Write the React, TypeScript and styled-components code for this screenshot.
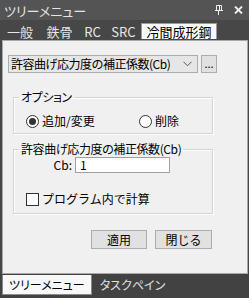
import React from 'react';
import styled, { createGlobalStyle } from 'styled-components';

const GlobalStyle = createGlobalStyle`
  html, body {
    margin: 0;
    padding: 0;
    background: #454545;
  }
  * {
    box-sizing: border-box;
  }
`;

const FONT = `"Noto Sans CJK JP", "Noto Sans", sans-serif`;

const Window = styled.div`
  width: 249px;
  height: 298px;
  display: flex;
  flex-direction: column;
  background: #474747;
  font-family: ${FONT};
  font-size: 12px;
  color: #000;
  overflow: hidden;
`;

const TitleBar = styled.div`
  height: 20px;
  display: flex;
  align-items: center;
  padding: 0 6px 0 4px;
  background: #545454;
  color: #e6e6e6;
  font-size: 13px;
  font-feature-settings: "palt";
  line-height: 1;
`;

const TitleText = styled.span`
  flex: 1;
`;

const TitleIcons = styled.div`
  display: flex;
  align-items: center;
  gap: 11px;
`;

const TabStrip = styled.div`
  height: 20px;
  display: flex;
  align-items: flex-start;
  padding-top: 3px;
  background: #474747;
`;

const Tab = styled.div<{ $active?: boolean; $w: number }>`
  width: ${(p) => p.$w}px;
  height: 16px;
  display: flex;
  align-items: center;
  justify-content: center;
  font-size: 13px;
  line-height: 1;
  color: ${(p) => (p.$active ? '#000' : '#e8e8e8')};
  background: ${(p) => (p.$active ? '#fafafa' : 'transparent')};
  border: ${(p) => (p.$active ? '1px solid #9a9a9a' : '1px solid transparent')};
  border-bottom: none;
`;

const Panel = styled.div`
  flex: 0 0 234px;
  margin: 0 1px 0 2px;
  background: #f0f0f0;
  border: 1px solid #a8a8a8;
  padding: 14px 0 0 5px;
  display: flex;
  flex-direction: column;
`;

const ComboRow = styled.div`
  display: flex;
  gap: 3px;
`;

const Combo = styled.div`
  width: 190px;
  height: 18px;
  display: flex;
  align-items: center;
  padding: 0 5px 0 2px;
  background: #e6e6e6;
  border: 1px solid #acacac;
  line-height: 1;
`;

const ComboText = styled.span`
  flex: 1;
  white-space: nowrap;
  letter-spacing: -0.5px;
`;

const MoreButton = styled.div`
  width: 16px;
  height: 18px;
  display: flex;
  align-items: center;
  justify-content: center;
  background: #e1e1e1;
  border: 1px solid #adadad;
  font-size: 11px;
  line-height: 1;
  padding-bottom: 2px;
`;

const Group = styled.fieldset<{ $top: number }>`
  width: 200px;
  margin: ${(p) => p.$top}px 0 0 5px;
  padding: 0;
  border: 1px solid #d4d4d4;
  box-shadow: inset 1px 1px 0 #ffffff, 1px 1px 0 #ffffff;
  min-width: 0;
`;

const Legend = styled.legend`
  margin-left: 5px;
  padding: 0 2px;
  font-size: 12px;
  line-height: 12px;
  letter-spacing: -0.4px;
  font-feature-settings: "palt";
`;

const RadioRow = styled.div`
  display: grid;
  grid-template-columns: 113px auto;
  padding: 11px 0 5px 12px;
`;

const Choice = styled.label`
  display: flex;
  align-items: center;
  gap: 3px;
  height: 14px;
  line-height: 1;
  white-space: nowrap;
`;

const RadioCircle = styled.span<{ $checked?: boolean }>`
  width: 13px;
  height: 13px;
  border-radius: 50%;
  border: 1px solid #333;
  background: #fff;
  display: flex;
  align-items: center;
  justify-content: center;
  &::after {
    content: '';
    width: 7px;
    height: 7px;
    border-radius: 50%;
    background: ${(p) => (p.$checked ? '#333' : 'transparent')};
  }
`;

const CheckBox = styled.span`
  width: 13px;
  height: 13px;
  border: 1px solid #333;
  background: #fff;
`;

const FieldRow = styled.div`
  display: flex;
  align-items: center;
  gap: 3px;
  margin-top: 2px;
`;

const FieldLabel = styled.span`
  width: 58px;
  text-align: right;
  line-height: 1;
`;

const TextBox = styled.div`
  width: 95px;
  height: 16px;
  display: flex;
  align-items: center;
  padding-left: 4px;
  background: #fff;
  border: 1px solid #a0a0a0;
  line-height: 1;
`;

const CheckRow = styled.div`
  margin-top: 19px;
  padding: 0 0 7px 12px;
`;

const ButtonRow = styled.div`
  width: 205px;
  display: flex;
  justify-content: flex-end;
  gap: 8px;
  margin-top: 16px;
  padding-right: 1px;
`;

const Button = styled.div<{ $w: number }>`
  width: ${(p) => p.$w}px;
  height: 19px;
  display: flex;
  align-items: center;
  justify-content: center;
  background: #e1e1e1;
  border: 1px solid #adadad;
  line-height: 1;
`;

const BottomBar = styled.div`
  flex: 1;
  display: flex;
  align-items: flex-start;
  padding: 1px 0 0 2px;
  background: #424242;
  gap: 1px;
`;

const BottomTab = styled.div<{ $active?: boolean }>`
  height: 20px;
  display: flex;
  align-items: center;
  padding: 0 6px;
  font-size: 12px;
  line-height: 1;
  font-feature-settings: "palt";
  color: ${(p) => (p.$active ? '#000' : '#e0e0e0')};
  background: ${(p) => (p.$active ? '#f8f8f8' : 'transparent')};
  border: 1px solid ${(p) => (p.$active ? '#8a8a8a' : 'transparent')};
  border-top: none;
`;

const PinIcon = () => (
  <svg width="8" height="10" viewBox="0 0 8 10">
    <path d="M1.5 0.5h5v5h-5z" fill="none" stroke="#f0f0f0" strokeWidth="1" />
    <path d="M4.5 0.5v5" stroke="#f0f0f0" strokeWidth="1" />
    <path d="M0 5.5h8" stroke="#f0f0f0" strokeWidth="1" />
    <path d="M3.5 5.5v4.5" stroke="#f0f0f0" strokeWidth="1" />
  </svg>
);

const CloseIcon = () => (
  <svg width="9" height="8" viewBox="0 0 9 8">
    <path d="M1 0.5l7 7M8 0.5l-7 7" stroke="#f0f0f0" strokeWidth="1.8" />
  </svg>
);

const Chevron = () => (
  <svg width="9" height="6" viewBox="0 0 9 6">
    <path d="M0.5 0.8l4 4 4-4" fill="none" stroke="#555" strokeWidth="1" />
  </svg>
);

export default function App() {
  return (
    <>
      <GlobalStyle />
      <Window>
        <TitleBar>
          <TitleText>ツリーメニュー</TitleText>
          <TitleIcons>
            <PinIcon />
            <CloseIcon />
          </TitleIcons>
        </TitleBar>
        <TabStrip>
          <Tab $w={40}>一般</Tab>
          <Tab $w={39}>鉄骨</Tab>
          <Tab $w={27}>RC</Tab>
          <Tab $w={35}>SRC</Tab>
          <Tab $w={76} $active>冷間成形鋼</Tab>
        </TabStrip>
        <Panel>
          <ComboRow>
            <Combo>
              <ComboText>許容曲げ応力度の補正係数(Cb)</ComboText>
              <Chevron />
            </Combo>
            <MoreButton>...</MoreButton>
          </ComboRow>

          <Group $top={18}>
            <Legend>オプション</Legend>
            <RadioRow>
              <Choice>
                <RadioCircle $checked />
                追加/変更
              </Choice>
              <Choice>
                <RadioCircle />
                削除
              </Choice>
            </RadioRow>
          </Group>

          <Group $top={9}>
            <Legend>許容曲げ応力度の補正係数(Cb)</Legend>
            <FieldRow>
              <FieldLabel>Cb:</FieldLabel>
              <TextBox>1</TextBox>
            </FieldRow>
            <CheckRow>
              <Choice>
                <CheckBox />
                プログラム内で計算
              </Choice>
            </CheckRow>
          </Group>

          <ButtonRow>
            <Button $w={56}>適用</Button>
            <Button $w={57}>閉じる</Button>
          </ButtonRow>
        </Panel>
        <BottomBar>
          <BottomTab $active>ツリーメニュー</BottomTab>
          <BottomTab>タスクペイン</BottomTab>
        </BottomBar>
      </Window>
    </>
  );
}
